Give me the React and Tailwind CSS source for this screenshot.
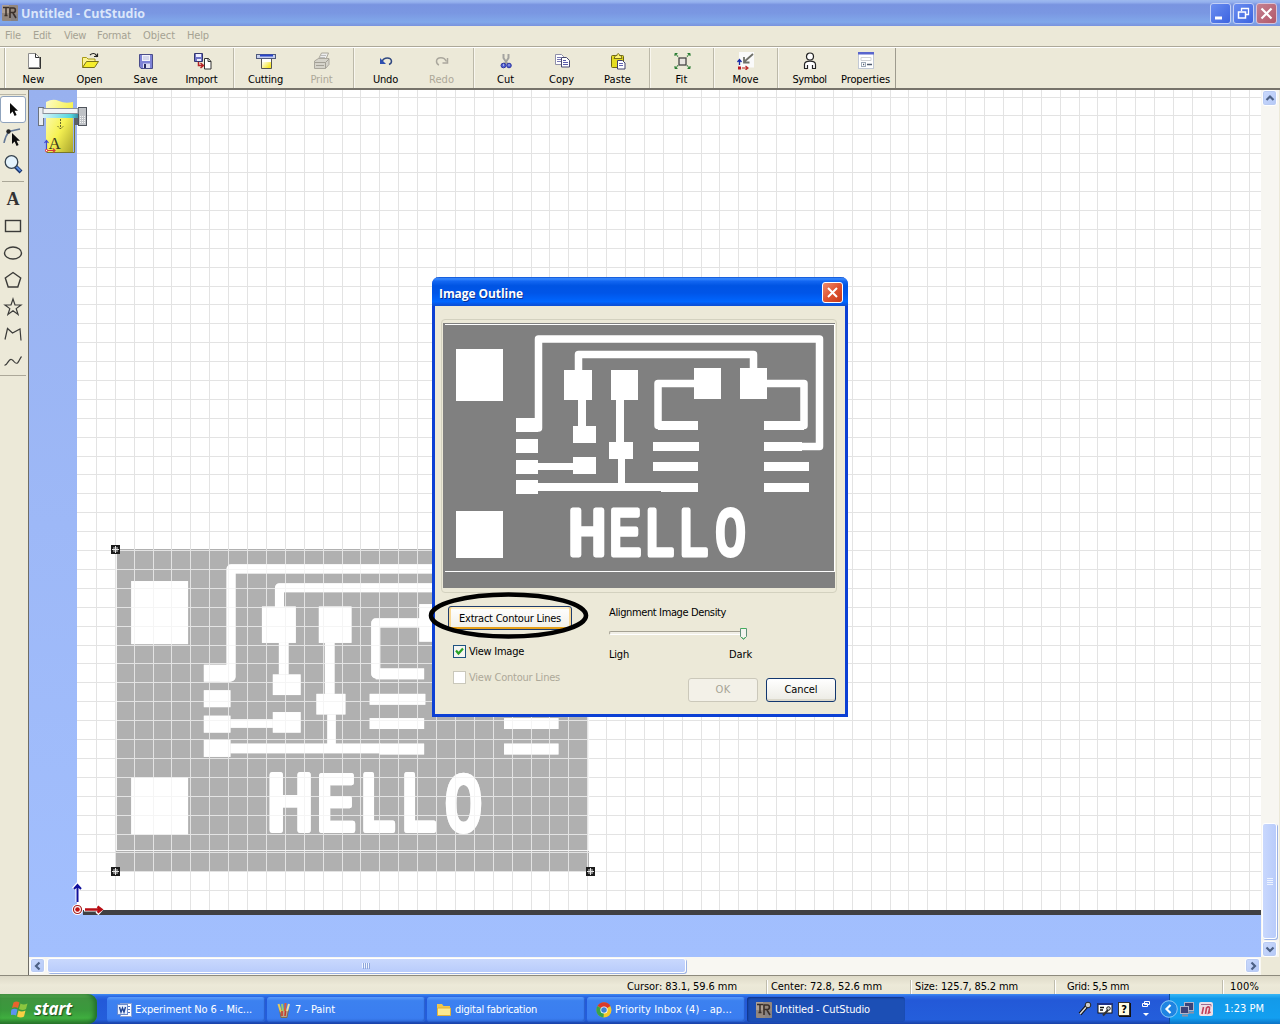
import React, { useLayoutEffect, useRef } from "react";

/* Text whose tracking is adjusted so that it fills the given width. */
function T({ w, className = "", children }) {
  const ref = useRef(null);
  useLayoutEffect(() => {
    const el = ref.current;
    el.style.letterSpacing = "0px";
    const n = el.textContent.length;
    const natural = el.getBoundingClientRect().width;
    el.style.letterSpacing = (w - natural) / n + "px";
  }, [w, children]);
  return (
    <span ref={ref} className={"inline-block whitespace-pre " + className}>
      {children}
    </span>
  );
}

const Svg = ({ w = 18, h = 18, className = "", children }) => (
  <svg width={w} height={h} viewBox={`0 0 ${w} ${h}`} className={"block shrink-0 " + className} fill="none">
    {children}
  </svg>
);

function AppIcon() {
  return (
    <Svg w={16} h={16}>
      <rect width="16" height="16" rx="1" fill="#94877d" />
      <path d="M0 0h7v8H0z" fill="#b9aa9d" opacity=".7" />
      <path d="M9 9h7v7H9z" fill="#7f7f86" opacity=".6" />
      <path d="M1 2.500h6M4 3v7M2.500 10.500h3" stroke="#3a302b" strokeWidth="1.500" />
      <path d="M8 13V3h3.500c2.500 0 2.500 4.500 0 4.500H8M11 8l3 5" stroke="#3a302b" strokeWidth="1.600" />
    </Svg>
  );
}

/* ---------- toolbar icons ---------- */
const icons = {
  New: (
    <Svg>
      <path d="M3.500 1.500h7l4 4V15.500h-11z" fill="#fdfdfd" stroke="#8d8d8d" />
      <path d="M10.500 1.500v4h4M15.500 5v11.500H3.500" stroke="#333" />
    </Svg>
  ),
  Open: (
    <Svg w={20}>
      <path d="M2.500 15V5.500h4l1.500 1.500h7v3" fill="#fdf391" stroke="#a89b17" />
      <path d="M2.500 15.500l4-6h12l-4 6z" fill="#f6ee2c" stroke="#77711b" />
      <path d="M10 3c2-2 5-2 6 0l1 2M14 4.500h3.500V1.500" stroke="#222" strokeWidth="1.200" />
    </Svg>
  ),
  Save: (
    <Svg>
      <path d="M2.500 2.500h13v14H4l-1.500-2z" fill="#7d82d6" stroke="#4a4d8a" />
      <path d="M5 3h8v6H5z" fill="#f2f3fb" />
      <path d="M6 5h6M6 7h6" stroke="#b8bbdc" />
      <path d="M6 11.500h7V16H6z" fill="#dedff4" />
      <path d="M7 12h2v4H7z" fill="#272a62" />
    </Svg>
  ),
  Import: (
    <Svg w={20} h={20}>
      <path d="M2.500 1.500h8v8h-8z" fill="#7075c8" stroke="#34376f" />
      <path d="M4 2h5v3H4zM5 7h4v2H5z" fill="#eef" />
      <path d="M12.500 6.500h4l2.500 3v7.500h-6.500z" fill="#fff" stroke="#333" />
      <path d="M16 6.500v3h3" stroke="#333" />
      <path d="M6.500 10v3.500h4.500M8.500 11l3 2.500-3 2.500" stroke="#b52226" strokeWidth="1.500" />
    </Svg>
  ),
  Cutting: (
    <Svg w={22}>
      <path d="M6.500 6h10v10.500h-10z" fill="url(#cutg)" stroke="#555" />
      <rect x="1.500" y="2.500" width="19" height="4" fill="#c7d0ee" stroke="#4f597c" />
      <path d="M5 3.500h13" stroke="#2945c9" strokeWidth="2" />
      <path d="M7 7h9v3H7z" fill="#fff" />
      <defs>
        <linearGradient id="cutg" x1="0" x2="1" y1="0" y2="1">
          <stop offset="0.300" stopColor="#fdfce0" />
          <stop offset="0.800" stopColor="#f7e830" />
        </linearGradient>
      </defs>
    </Svg>
  ),
  Print: (
    <Svg>
      <path d="M5.500 7l3-6h7l-2.500 6" fill="#eee" stroke="#aaa69a" />
      <path d="M8 3.500h5M7 5.500h5" stroke="#bbb" />
      <path d="M1.500 9l4-2.500H16v6l-3.500 4h-11z" fill="#d5d3ca" stroke="#aaa79d" />
      <path d="M2 10.500h10.500L16 7M12.500 10.500v6M3 13.500h8" stroke="#a3a096" />
    </Svg>
  ),
  Undo: (
    <Svg>
      <path d="M5 9.500C7 4.500 14 5 14.500 9c0 2-1 3-2.500 3.500" stroke="#304880" strokeWidth="1.500" />
      <path d="M3 6v6h6" fill="#2d4fb0" />
    </Svg>
  ),
  Redo: (
    <Svg>
      <path d="M13.500 9.500C11 4 4 5 3.500 9c0 2 1 3.500 2.500 4" stroke="#aaa79d" strokeWidth="1.500" />
      <path d="M14.500 6v5h-5" stroke="#aaa79d" strokeWidth="1.500" />
    </Svg>
  ),
  Cut: (
    <Svg>
      <path d="M6.500 2v4l4 6M11.500 2v4l-4 6" stroke="#a3a3a0" strokeWidth="2" />
      <ellipse cx="6.500" cy="13.500" rx="2.500" ry="2.300" fill="#5161d2" stroke="#2e36a0" />
      <ellipse cx="12" cy="13.500" rx="2.300" ry="2.300" fill="#5161d2" stroke="#2e36a0" />
      <path d="M6 13h1M11.500 13h1" stroke="#fff" />
    </Svg>
  ),
  Copy: (
    <Svg>
      <path d="M2.500 2.500h6l2 2v8h-8z" fill="#fff" stroke="#8f8fa8" />
      <path d="M4 5.500h4M4 7.500h4M4 9.500h4" stroke="#7777b5" />
      <path d="M8.500 5.500h5l3 3v6.500h-8z" fill="#fff" stroke="#484870" />
      <path d="M10 8.500h3M10 10.500h5M10 12.500h5" stroke="#5b5bab" />
    </Svg>
  ),
  Paste: (
    <Svg>
      <rect x="2.500" y="3.500" width="12" height="12" rx="1" fill="#e4dc20" stroke="#6d6614" />
      <path d="M5 6.500l1.500-3h1.500c0-2.500 2.500-2.500 2.500 0H12l1 3z" fill="#fff575" stroke="#756d1c" />
      <path d="M8.500 8.500h5l2.500 2.500v6H8.500z" fill="#fff" stroke="#41416d" />
      <path d="M10 11.500h4M10 13.500h4" stroke="#6464b2" />
    </Svg>
  ),
  Fit: (
    <Svg>
      <rect x="6" y="6" width="7" height="7" fill="#e7e5e0" stroke="#444" strokeWidth="1.300" />
      <path d="M2 4V1.500h2.500M14.500 1.500H17V4M2 14v2.500h2.500M14.500 16.500H17V14" stroke="#287c32" />
      <path d="M2 1.500l3 3M17 1.500l-3 3M2 16.500l3-3M17 16.500l-3-3" stroke="#287c32" strokeWidth="1.200" strokeDasharray="2.500 .6" />
    </Svg>
  ),
  Move: (
    <Svg w={20}>
      <rect x="3" y="0" width="15" height="15.500" fill="#fafafa" />
      <path d="M17 2L8.500 9.500M8 5V10.500h5.500" stroke="#6f7069" strokeWidth="1.800" />
      <path d="M3.500 8v5M1.500 10l2-2.500 2 2.500" stroke="#182ba8" strokeWidth="1.300" />
      <path d="M6 16h6M9.500 14l2.500 2-2.500 2" stroke="#c02a2a" strokeWidth="1.200" />
      <rect x="2" y="14.500" width="3" height="3" fill="#bb1720" />
    </Svg>
  ),
  Symbol: (
    <Svg>
      <path d="M3.500 17v-4.500c0-5 11-5 11 0V17z" fill="#fff" />
      <circle cx="9" cy="4.500" r="3.500" fill="#fff" stroke="#222" strokeWidth="1.200" />
      <path d="M3.500 16.500v-4c0-4.500 11-4.500 11 0v4M6.500 17v-4M11.500 17v-4M3 16.500h3.500M11.500 16.500h3.500" stroke="#222" strokeWidth="1.200" />
    </Svg>
  ),
  Properties: (
    <Svg>
      <rect x="1.500" y="1" width="15" height="15.500" fill="#fff" stroke="#c2c9d5" />
      <rect x="1" y="0" width="16" height="2.500" fill="#5965cd" />
      <path d="M4 5.500h10v3H4z" stroke="#d0d2d5" />
      <rect x="4.500" y="10.500" width="4" height="4" stroke="#a0abb8" />
      <path d="M6 12.500h1.200M10 12.500h5" stroke="#505b6e" strokeWidth="1.400" />
    </Svg>
  ),
};

const toolbar = [
  ["New", 22], ["Open", 26], ["Save", 24], ["Import", 32], null,
  ["Cutting", 35], ["Print", 22, true], null,
  ["Undo", 25], ["Redo", 25, true], null,
  ["Cut", 17], ["Copy", 25], ["Paste", 27], null,
  ["Fit", 12], null, ["Move", 26], null, ["Symbol", 34], ["Properties", 49],
];

/* ---------- left tool palette ---------- */
const Cursor = ({ x = 0, y = 0 }) => (
  <path transform={`translate(${x} ${y})`} d="M0 0v11l2.600-2.500 2 4.500 2-1-2-4.200H8z" fill="#0b0b0b" />
);
const shape = { stroke: "#3b3b39", strokeWidth: 1.4 };
const tools = [
  <Svg w={20} h={20} key="node">
    <path d="M1 16C2 10 4 7 6 4.500l11-2.500" stroke="#637795" strokeWidth="1.500" />
    <circle cx="5.500" cy="4.500" r="2.200" fill="#222" />
    <Cursor x={9} y={6} />
  </Svg>,
  <Svg w={20} h={20} key="zoom">
    <path d="M12 12l6 6" stroke="#17326b" strokeWidth="4" />
    <path d="M12 11.500l5.500 5.500" stroke="#5a8ddd" strokeWidth="2" />
    <circle cx="8.500" cy="8" r="6.300" fill="#e4f3fd" stroke="#36434f" strokeWidth="1.300" />
  </Svg>,
];
const shapes = [
  <span key="a" className="w-[20px] text-center font-['Liberation_Serif',serif] text-[18px] font-bold leading-[20px] text-[#333]">A</span>,
  <Svg w={20} h={20} key="r"><rect x="2.500" y="4.500" width="15" height="11" {...shape} /></Svg>,
  <Svg w={20} h={20} key="e"><ellipse cx="10" cy="10" rx="8.500" ry="6" {...shape} /></Svg>,
  <Svg w={20} h={20} key="p"><path d="M10 2.500l7.700 5.500-2.900 9H5.200L2.300 8z" {...shape} /></Svg>,
  <Svg w={20} h={20} key="s"><path d="M10 2l2 6h6l-4.800 3.600 1.900 5.900-5.100-3.700-5.100 3.700 1.900-5.900L2 8h6z" {...shape} strokeWidth="1.200" /></Svg>,
  <Svg w={20} h={20} key="l"><path d="M2 15.500L4.500 4.500l5 4.500L17 5l1 11.500" {...shape} strokeWidth="1.200" /></Svg>,
  <Svg w={20} h={20} key="c"><path d="M1.500 14c3 1 4-7 7-5.500 3 1 3 5 6 3.500 2-2 2.500-5 4-6.500" {...shape} strokeWidth="1.200" /></Svg>,
];

/* ---------- circuit board ---------- */
const rects = [
  [456, 349, 47, 52], [456, 511, 47, 47],
  [564, 370, 28, 30], [611, 370, 27, 30], [694, 368, 27, 31], [740, 368, 27, 31],
  [578, 400, 8, 26], [573, 426, 23, 17], [573, 457, 23, 17],
  [609, 442, 24, 17], [616, 400, 8, 42], [618, 459, 7, 26],
  [516, 418, 22, 14], [516, 439, 22, 14], [516, 460, 22, 14], [516, 480, 22, 14],
  [538, 463, 35, 7], [538, 483, 124, 8], [661, 483, 37, 9],
  [658, 421, 40, 9], [653, 442, 46, 9], [653, 462, 45, 9],
  [764, 421, 40, 9], [764, 442, 38, 9], [764, 462, 45, 9], [764, 483, 45, 9],
];
/* silkscreen letters: horizontal position and width factor of each */
const letters = [
  ["H", 567.6, 0.97],
  ["E", 608.8, 0.81],
  ["L", 643.5, 0.78],
  ["L", 677.5, 0.78],
  ["O", 715.2, 0.75],
];
const Tracks = () => (
  <g>
    {rects.map(([x, y, w, h], i) => (
      <rect key={i} x={x} y={y} width={w} height={h} fill="#fff" />
    ))}
    <g stroke="#fff" strokeWidth="7.500" strokeLinejoin="round" strokeLinecap="round" fill="none">
      <path d="M530 428H538.500V339H819.500V446.500H800" />
      <path d="M578.500 372V354.500H753.500V370" />
      <path d="M694 383.500H658V425.500H670M767 383.500H804V425.500H790" />
    </g>
    <g
      fontSize="68"
      fill="#fff"
      stroke="#fff"
      strokeWidth="5"
      strokeLinejoin="round"
      className="font-['Liberation_Mono',monospace]"
    >
      {letters.map(([ch, x, s], i) => (
        <text key={i} transform={`translate(${x} 554.5) scale(${s} 1)`}>{ch}</text>
      ))}
    </g>
  </g>
);

const vLines = Array.from({ length: 62 }, (_, i) => Math.floor(77.45 + 18.898 * (i + 1)));
const hLines = Array.from({ length: 43 }, (_, i) => Math.floor(909.65 - 18.898 * (i + 1)));
const boardMap = "translate(-420.8 157.7) scale(1.2105 1.213)";

function Plotter() {
  return (
    <g>
      <path d="M46 102q7-4 13-1t14 1v50H46z" fill="url(#paper)" />
      <path d="M46.500 152.500h28v-40" stroke="#77772c" />
      <rect x="38.500" y="107.500" width="5" height="18" fill="#e9edf2" stroke="#6b7380" />
      <path d="M74 108h5v17h-5z" fill="#5b6068" />
      <rect x="78.500" y="107.500" width="8" height="18" fill="#bfc2c6" stroke="#50545c" />
      <path d="M80 116.500h6M80 118.500h6M80 120.500h6M80 122.500h6" stroke="#f4f4f4" strokeDasharray="1 1" />
      <rect x="43" y="108.500" width="35" height="5" fill="#f3f4f6" stroke="#8b919b" />
      <rect x="43" y="114" width="35" height="4" fill="url(#beam)" />
      <path d="M60.500 119v10M57.500 126l3 3 3-3" stroke="#67672c" strokeDasharray="2 1" />
      <text x="48.500" y="148.500" fontSize="17" fill="#3d3d20" className="font-['Liberation_Serif',serif]">A</text>
      <path d="M46.500 150v-9M44.500 143l2-2.500 2 2.500" stroke="#3f49cf" strokeWidth="1.200" />
      <path d="M46 150.500h9M53 148.500l2 2-2 2" stroke="#d23b3b" strokeWidth="1.200" />
      <path d="M45.500 149.500h2v2h-2z" fill="#fff" stroke="#d55" />
    </g>
  );
}

function Handle({ x, y }) {
  return (
    <g>
      <rect x={x} y={y} width="9" height="9" fill="#1c1c1c" />
      <path d={`M${x + 2} ${y + 2}h5v5h-5z`} fill="#777" />
      <path d={`M${x + 4.5} ${y + 1}v7M${x + 1} ${y + 4.5}h7`} stroke="#e5e5e5" />
    </g>
  );
}

function Drawing() {
  return (
    <svg width="1232" height="867" viewBox="29 90 1232 867" fill="none" className="block">
      <defs>
        <linearGradient id="strip" x1="0" x2="0" y1="0" y2="1">
          <stop offset="0" stopColor="#98b1ef" />
          <stop offset="0.500" stopColor="#9db8f7" />
          <stop offset="1" stopColor="#a2bffe" />
        </linearGradient>
        <linearGradient id="paper" x1="0" x2="1" y1="0" y2="1">
          <stop offset="0" stopColor="#fdfccb" />
          <stop offset="0.550" stopColor="#f6f252" />
          <stop offset="1" stopColor="#aaa52d" />
        </linearGradient>
        <linearGradient id="beam" x1="0" x2="1" y1="0" y2="0">
          <stop offset="0" stopColor="#d5f3f8" />
          <stop offset="0.800" stopColor="#52d6dd" />
          <stop offset="1" stopColor="#368ea5" />
        </linearGradient>
      </defs>
      <rect x="29" y="90" width="1232" height="867" fill="url(#strip)" />
      <rect x="77" y="90" width="1184" height="820" fill="#fff" />
      <rect x="116" y="549" width="473" height="322" fill="#b0b0b0" />
      <g transform={boardMap}><Tracks /></g>
      <g shapeRendering="crispEdges" fill="#e3e3e3">
        {vLines.map((x) => <rect key={x} x={x} y="90" width="1" height="820" />)}
        {hLines.map((y) => <rect key={y} x="77" y={y} width="1184" height="1" />)}
        <path d="M117 850h472v1H117zM116 550h1v301h-1zM588 550h1v301h-1z" fill="#f4f4f4" />
      </g>
      <g transform={boardMap} opacity="0.650"><Tracks /></g>
      <rect x="83" y="910" width="1178" height="5" fill="#404042" />
      <Handle x={111} y={545} />
      <Handle x={111} y={867} />
      <Handle x={586} y={867} />
      <path d="M77.500 902V885M73.500 889l4-4.500 4 4.500" stroke="#fff" strokeWidth="4" />
      <path d="M77.500 902V886M74 889l3.500-4 3.500 4" stroke="#10109c" strokeWidth="2" />
      <path d="M84 909.500h15M97 905l4 4.500-4 4.500" stroke="#fff" strokeWidth="4" />
      <path d="M85 909.500h15M97.500 906.500l4 3-4 3" stroke="#b90e14" strokeWidth="2.400" />
      <circle cx="77.500" cy="909.500" r="4.500" fill="#fff" stroke="#fff" strokeWidth="2" />
      <circle cx="77.500" cy="909.500" r="4" stroke="#a51b1b" strokeWidth="1.200" />
      <circle cx="77.500" cy="909.500" r="2.300" fill="#c01414" />
      <Plotter />
    </svg>
  );
}

/* ---------- scroll bars ---------- */
function ScrollButton({ d, className = "" }) {
  return (
    <span className={"flex shrink-0 items-center justify-center rounded-[3px] border border-white bg-gradient-to-br from-[#cbdafc] to-[#b4c8f7] shadow-[inset_0_0_0_1px_#b9cbf3] " + className}>
      <Svg w={10} h={10}><path d={d} stroke="#4d6185" strokeWidth="2.200" /></Svg>
    </span>
  );
}

/* ---------- dialog ---------- */
function Dialog() {
  return (
    <div className="absolute left-[432px] top-[277px] flex h-[440px] w-[416px] flex-col rounded-t-[7px] border-x-[3px] border-b-[3px] border-[#0c40d4] bg-[#ece9d8]">
      <div className="-mx-[3px] flex h-[29px] shrink-0 items-center justify-between rounded-t-[7px] bg-[linear-gradient(to_bottom,#0a4fd0_0%,#3a8bff_6%,#1367f2_14%,#0054e3_30%,#0055e8_55%,#0066ff_85%,#0a50d8_97%)] pl-[7px] pr-[5px] pt-[2px]">
        <T w={84} className="pt-[2px] font-['Open_Sans','Noto_Sans',sans-serif] text-[12px] font-bold text-white [text-shadow:1px_1px_0_#0a2f8f]">Image Outline</T>
        <span className="flex h-[21px] w-[21px] items-center justify-center rounded-[3px] border border-white bg-gradient-to-br from-[#ee8a6b] via-[#df5330] to-[#c5391a]">
          <Svg w={13} h={13}><path d="M2 2l9 9M11 2l-9 9" stroke="#fff" strokeWidth="2" /></Svg>
        </span>
      </div>
      <div className="ml-[6px] mt-[13px] h-[274px] w-[396px] rounded-[4px] border border-[#d3d1bf] pl-px pt-[3px]">
        <svg width="392" height="265" viewBox="443 323 392 265" className="block">
          <rect x="443" y="323" width="392" height="265" fill="#808080" />
          <path d="M445 324.500h390M445 571.500h390M834.500 324v248" stroke="#fff" />
          <Tracks />
        </svg>
      </div>
      <div className="flex flex-1 pt-[13px]">
        <div className="flex w-[174px] flex-col pl-[13px]">
          <button className="flex h-[24px] w-[124px] items-center justify-center rounded-[3px] border border-[#1e3c6e] bg-gradient-to-b from-white to-[#f1efe7] shadow-[inset_2px_0_0_#f8d793,inset_-2px_0_0_#f8d793,inset_0_-2px_0_#e5a01a,inset_0_2px_0_#fff0c7]">
            <T w={102} className="pt-px">Extract Contour Lines</T>
          </button>
          <label className="ml-[5px] mt-[14px] flex h-[14px] items-center gap-[3px]">
            <span className="flex h-[13px] w-[13px] items-center justify-center border border-[#1d5281] bg-[#f5f5f1]">
              <Svg w={9} h={9}><path d="M1 3.500l2.500 3L8 1.500" stroke="#27a127" strokeWidth="2.200" /></Svg>
            </span>
            <T w={55} className="pt-px">View Image</T>
          </label>
          <label className="ml-[5px] mt-[12px] flex h-[14px] items-center gap-[3px] text-[#aca899]">
            <span className="h-[13px] w-[13px] border border-[#cac8bb] bg-white" />
            <T w={91} className="pt-px">View Contour Lines</T>
          </label>
        </div>
        <div className="flex flex-1 flex-col">
          <T w={117} className="h-[14px] self-start leading-[14px]">Alignment Image Density</T>
          <div className="mt-[6px] flex h-[14px] w-[140px] items-center">
            <span className="h-[4px] flex-1 rounded border border-[#a5a294] border-b-white border-r-white bg-[#f1efe6]" />
            <Svg w={9} h={13} className="-ml-[5px] mr-[1px]"><path d="M1.500 1.500h6v8l-3 3-3-3z" fill="#f4f4ef" stroke="#5f8f78" /><path d="M2 1.500h5M2.500 10l2 2 2-2" stroke="#42b15c" /></Svg>
          </div>
          <div className="mt-[8px] flex h-[14px] w-[143px] items-center justify-between">
            <T w={20}>Ligh</T>
            <T w={23}>Dark</T>
          </div>
          <div className="ml-[79px] mt-[16px] flex gap-[8px]">
            <button className="flex h-[24px] w-[70px] items-center justify-center rounded-[3px] border border-[#cbc8ba] bg-[#f3f1e8] text-[#a6a395]"><T w={15}>OK</T></button>
            <button className="flex h-[24px] w-[70px] items-center justify-center rounded-[3px] border border-[#12376f] bg-gradient-to-b from-white to-[#ecebe4] shadow-[inset_0_-2px_0_#dbd8cb]"><T w={33}>Cancel</T></button>
          </div>
        </div>
      </div>
    </div>
  );
}

/* ---------- task bar ---------- */
const tasks = [
  ["Experiment No 6 - Mic...", 117, (
    <Svg w={16} h={16}><rect x="4.500" y="1.500" width="11" height="13" fill="#fff" stroke="#8aa1d4" /><path d="M12 4.500h2M12 7.500h2M12 10.500h2" stroke="#5573bb" /><rect x="1.500" y="2.500" width="10" height="10" fill="#e8f0ff" stroke="#6c8ccc" /><path d="M3.500 5l1.500 5 1.500-4L8 10l1.500-5" stroke="#214695" strokeWidth="1.400" /></Svg>
  )],
  ["7 - Paint", 40, (
    <Svg w={16} h={16}><path d="M3.500 8h9l-1.500 7.500H5z" fill="#b3a78f" stroke="#7d6b52" /><path d="M5 10L2.500 2" stroke="#e8c85a" strokeWidth="2" /><path d="M7 9L6 2" stroke="#9ccf6a" strokeWidth="2" /><path d="M9 9l.5-8" stroke="#d95a3c" strokeWidth="2" /><path d="M11 9l2-7" stroke="#f0dfa0" strokeWidth="2" /><path d="M6 9v5M9.500 9l-.5 5" stroke="#c93826" strokeWidth="1.500" /></Svg>
  )],
  ["digital fabrication", 82, (
    <Svg w={16} h={16}><path d="M1 2h5l1.500 2H14v9H1z" fill="#f0c64b" /><path d="M1.500 13.500V6h13v7.500z" fill="#fce991" stroke="#e0b23b" /></Svg>
  )],
  ["Priority Inbox (4) - ap...", 117, (
    <Svg w={16} h={16}><circle cx="8" cy="8" r="7.500" fill="#f2c92c" /><path d="M8 8L1.500 4a7.500 7.500 0 0113 0z" fill="#d93a2b" /><path d="M8 8L1.500 4A7.500 7.500 0 007.500 15.500z" fill="#38a24a" /><circle cx="8" cy="8" r="3.600" fill="#fff" /><circle cx="8" cy="8" r="2.800" fill="#3c83d6" /></Svg>
  )],
  ["Untitled - CutStudio", 95, <AppIcon key="app" />],
];

function Taskbar() {
  return (
    <div className="flex h-[30px] shrink-0 bg-[linear-gradient(to_bottom,#3f8cf3_0%,#2c69e4_8%,#2359d8_20%,#245edb_85%,#1941a5_100%)] text-white">
      <div className="flex w-[97px] items-center gap-[5px] rounded-r-[9px] bg-[linear-gradient(to_bottom,#5eac56_0%,#3f943f_15%,#3a9a3c_55%,#3fae3f_80%,#2b762b_100%)] pl-[11px] shadow-[inset_-3px_0_4px_#22702a]">
        <Svg w={18} h={18}>
          <path d="M2.500 2.500q3-2 6 0L7 8q-3-1.500-6 0z" fill="#e8632e" />
          <path d="M9.500 3.500q3 2 7 0L15 9q-3 2-7 0z" fill="#8cc63f" />
          <path d="M.500 9.500q3-1.500 6 0L5 15.500q-3-1.500-6 0z" fill="#5c93f0" />
          <path d="M7.500 10.500q3 2 7 0L13 16.500q-3 2-7 0z" fill="#f8d044" />
        </Svg>
        <T w={38} className="pb-[1px] font-['Open_Sans',sans-serif] text-[17px] font-bold italic leading-none [text-shadow:1px_1px_1px_#1d4d1d]">start</T>
      </div>
      <div className="flex flex-1 gap-[2px] pl-[10px] pt-[3px]">
        {tasks.map(([label, w, icon], i) => (
          <div
            key={label}
            className={
              "flex h-[25px] w-[158px] items-center gap-[3px] rounded-[3px] pl-[9px] " +
              (i === 4
                ? "bg-[#1c4fb5] shadow-[inset_1px_1px_2px_#0f3385]"
                : "bg-[linear-gradient(to_bottom,#5a9bfa_0%,#3c81f0_15%,#3a7df0_85%,#2f6bd8_100%)] shadow-[inset_-1px_-1px_1px_#2a5fcb]")
            }
          >
            {icon}
            <T w={w}>{label}</T>
          </div>
        ))}
      </div>
      <div className="flex w-[92px] items-center gap-[5px] pl-px">
        <Svg w={14} h={16}><path d="M2 13l7-8" stroke="#111" strokeWidth="3.500" /><path d="M2 13l7-8" stroke="#ddd" strokeWidth="1.500" /><circle cx="10" cy="4" r="2.800" fill="#ccc" stroke="#222" /></Svg>
        <Svg w={16} h={16}><rect x="1" y="2.500" width="14" height="9.500" fill="#fff" stroke="#111" /><path d="M1 3h14" stroke="#1e2f86" strokeWidth="2" /><path d="M3 6.500h4M3 9h3" stroke="#111" strokeWidth="1.300" /><path d="M6 14.500l5-5.500" stroke="#333" strokeWidth="2" /><circle cx="11.500" cy="7.500" r="1.800" fill="#ccc" stroke="#222" /></Svg>
        <span className="flex h-[14px] w-[12px] items-center justify-center border border-[#333] bg-[#fffce1] text-[11px] font-bold leading-none text-black shadow-[1px_1px_0_#111]">?</span>
        <Svg w={10} h={20} className="ml-[6px]"><path d="M3.500 2.500h5v3h-5zM1.500 4.500h5v3h-5z" fill="#2459d5" stroke="#fff" /><path d="M2 14h6l-3 3z" fill="#fff" /></Svg>
      </div>
      <div className="flex w-[111px] items-center bg-[linear-gradient(to_bottom,#38b7f6_0%,#139ae9_15%,#139ff0_80%,#0c72c5_100%)] shadow-[inset_1px_0_0_#0c4f9e]">
        <Svg w={18} h={18} className="-ml-[9px]"><circle cx="9" cy="9" r="8.300" fill="#1f84e2" stroke="#8ccbf7" /><path d="M10.500 5L6.500 9l4 4" stroke="#fff" strokeWidth="2.200" /></Svg>
        <Svg w={16} h={16} className="ml-px"><rect x="5.500" y="1.500" width="9" height="8" fill="#3a4478" stroke="#b1b5c8" /><rect x="1.500" y="5.500" width="8" height="7" fill="#3c4378" stroke="#b1b5c8" /><path d="M3 14.500h6M9 11.500h6" stroke="#8f8fa3" strokeWidth="2" /></Svg>
        <Svg w={16} h={16} className="ml-[3px]"><rect x="1" y="1" width="14" height="14" rx="2" fill="#eedfe6" /><path d="M4 13l1.500-7M7.500 13l1-6c2-2 3.500-1 3 1l-1 4 2-1" stroke="#c2405a" strokeWidth="1.600" /><path d="M3 3.500h10v2" stroke="#9c6d92" /></Svg>
        <T w={40} className="ml-[10px]">1:23 PM</T>
      </div>
    </div>
  );
}

const menu = [["File", 16, "w-[28px]"], ["Edit", 18, "w-[31px]"], ["View", 22, "w-[33px]"], ["Format", 34, "w-[46px]"], ["Object", 32, "w-[44px]"], ["Help", 22, "w-[30px]"]];
const status = [
  ["Cursor: 83.1, 59.6 mm", 110, "w-[139px]"],
  ["Center: 72.8, 52.6 mm", 111, "w-[144px] pl-[4px]"],
  ["Size: 125.7, 85.2 mm", 103, "w-[144px] pl-[4px]"],
  ["Grid: 5,5 mm", 62, "w-[168px] pl-[12px]"],
  ["100%", 29, "w-[56px] pl-[7px]"],
];

export default function App() {
  return (
    <div className="relative flex h-[1024px] w-[1280px] flex-col overflow-hidden bg-[#ece9d8] font-['DejaVu_Sans_Condensed','Noto_Sans',sans-serif] text-[11px] leading-[14px] text-black">
      {/* title bar */}
      <div className="flex h-[26px] shrink-0 items-center bg-[linear-gradient(to_bottom,#9db9ee_0%,#95b1ee_8%,#7994e0_18%,#7a97e2_50%,#81a8ea_85%,#7992dd_100%)] pl-[2px] pr-[3px]">
        <AppIcon />
        <T w={124} className="ml-[3px] pt-px font-['Open_Sans','Noto_Sans',sans-serif] text-[12.5px] font-bold text-[#dbe6fa]">Untitled - CutStudio</T>
        <div className="ml-auto flex gap-[2px]">
          <span className="flex h-[21px] w-[21px] rounded-[3px] border border-[#c3d0f6] bg-gradient-to-br from-[#6a8df0] to-[#3c63e0]"><Svg w={19} h={19}><path d="M4 14h7" stroke="#fff" strokeWidth="3" /></Svg></span>
          <span className="flex h-[21px] w-[21px] rounded-[3px] border border-[#c3d0f6] bg-gradient-to-br from-[#6a8df0] to-[#3c63e0]"><Svg w={19} h={19}><path d="M7.500 7V4.500h7v6H12M7 4.500h8" stroke="#fff" strokeWidth="1.300" /><path d="M4.500 8h7v6h-7zM4 8h8" stroke="#fff" strokeWidth="1.500" /></Svg></span>
          <span className="flex h-[21px] w-[21px] rounded-[3px] border border-[#d9c3d8] bg-gradient-to-br from-[#c48191] to-[#b2586a]"><Svg w={19} h={19}><path d="M4.500 4.500l10 10M14.500 4.500l-10 10" stroke="#fff" strokeWidth="2.200" /></Svg></span>
        </div>
      </div>

      {/* menu */}
      <div className="flex h-[21px] shrink-0 items-center border-b border-[#aca899] pb-px pl-[5px] text-[#a5a293]">
        {menu.map(([m, w, cls]) => (
          <span key={m} className={cls}><T w={w}>{m}</T></span>
        ))}
      </div>

      {/* tool bar */}
      <div className="flex h-[43px] shrink-0 border-b-2 border-t border-b-[#76736a] border-t-white">
        <div className="flex w-[896px] border-r border-[#9e9b8e] pl-[4px]">
          <span className="w-[2px] border-l border-[#b8b5a5] bg-white" />
          {toolbar.map((it, i) =>
            it ? (
              <div key={it[0]} className={"flex w-[56px] flex-col items-center pr-px pt-[4px] " + (it[2] ? "text-[#aca899]" : "")}>
                <span className="flex h-[20px] items-start">{icons[it[0]]}</span>
                <T w={it[1]} className="pt-px">{it[0]}</T>
              </div>
            ) : (
              <span key={i} className="flex w-[8px] justify-center"><span className="w-[2px] border-l border-[#bcb9a9] bg-[#f8f6ee]" /></span>
            )
          )}
        </div>
      </div>

      {/* work area */}
      <div className="flex h-[885px] shrink-0">
        <div className="flex w-[29px] flex-col border-r border-[#6f6d66] pr-[2px]">
          <div className="h-[5px] border-b border-[#b9b6a6]" />
          <div className="mt-[1px] flex h-[27px] items-center justify-center rounded-[3px] border border-[#8fa3bd] bg-white">
            <Svg w={20} h={20}><Cursor x={7} y={3} /></Svg>
          </div>
          {tools.map((t, i) => <div key={i} className="flex h-[27px] items-center justify-center">{t}</div>)}
          <div className="mx-[2px] mt-[4px] h-[4px] border-t border-[#aaa798]" />
          {shapes.map((t, i) => <div key={i} className="flex h-[27px] items-center justify-center">{t}</div>)}
          <div className="mt-[1px] border-t border-[#aca899]" />
        </div>
        <div className="flex w-[1251px] flex-col">
          <div className="flex h-[867px]">
            <Drawing />
            <div className="flex w-[18px] flex-col items-center bg-[#f7f6f1] pr-px">
              <ScrollButton d="M1.500 7L5 3.500 8.500 7" className="h-[16px] w-[15px]" />
              <div className="mt-auto flex h-[116px] w-[15px] items-center justify-center rounded-[3px] border border-white bg-gradient-to-r from-[#c9d8fd] to-[#b9ccfb] shadow-[1px_1px_0_#9db3e4]">
                <Svg w={8} h={9}><path d="M1 1.500h6M1 3.500h6M1 5.500h6M1 7.500h6" stroke="#edf3ff" /></Svg>
              </div>
              <ScrollButton d="M1.500 3.500L5 7l3.500-3.500" className="mt-[2px] h-[16px] w-[15px]" />
            </div>
          </div>
          <div className="flex h-[18px] items-center">
            <div className="flex h-full w-[1232px] items-start bg-[#f8f7f2] pl-px pt-px">
              <ScrollButton d="M6.500 1.500L3 5l3.500 3.500" className="h-[15px] w-[15px]" />
              <div className="ml-[2px] flex h-[15px] w-[639px] items-center justify-center rounded-[3px] border border-white bg-gradient-to-b from-[#c9d8fd] to-[#b9ccfb] shadow-[1px_1px_0_#9db3e4]">
                <Svg w={9} h={8}><path d="M1.500 1v6M3.500 1v6M5.500 1v6M7.500 1v6" stroke="#8ea6db" /><path d="M.5 1v5M2.500 1v5M4.500 1v5M6.500 1v5" stroke="#edf3ff" /></Svg>
              </div>
              <ScrollButton d="M3.500 1.500L7 5 3.500 8.500" className="ml-auto mr-[1px] h-[15px] w-[15px]" />
            </div>
          </div>
        </div>
      </div>

      {/* status bar */}
      <div className="flex h-[19px] shrink-0 items-center border-t border-[#8d8a7d] bg-gradient-to-b from-[#dedac8] via-[#ece9d8] to-[#e9e6d5] pl-[627px] pt-[3px]">
        {status.map(([s, w, cls], i) => (
          <span key={s} className={"shrink-0 " + cls + (i ? " border-l border-[#bfbcad] shadow-[inset_1px_0_0_#fff]" : "")}><T w={w}>{s}</T></span>
        ))}
      </div>

      <Taskbar />
      <Dialog />

      <svg width="164" height="50" viewBox="426 591 164 50" className="absolute left-[426px] top-[591px]" fill="none">
        <ellipse cx="508.500" cy="615.500" rx="77.500" ry="21" stroke="#000" strokeWidth="4.600" />
      </svg>
    </div>
  );
}
